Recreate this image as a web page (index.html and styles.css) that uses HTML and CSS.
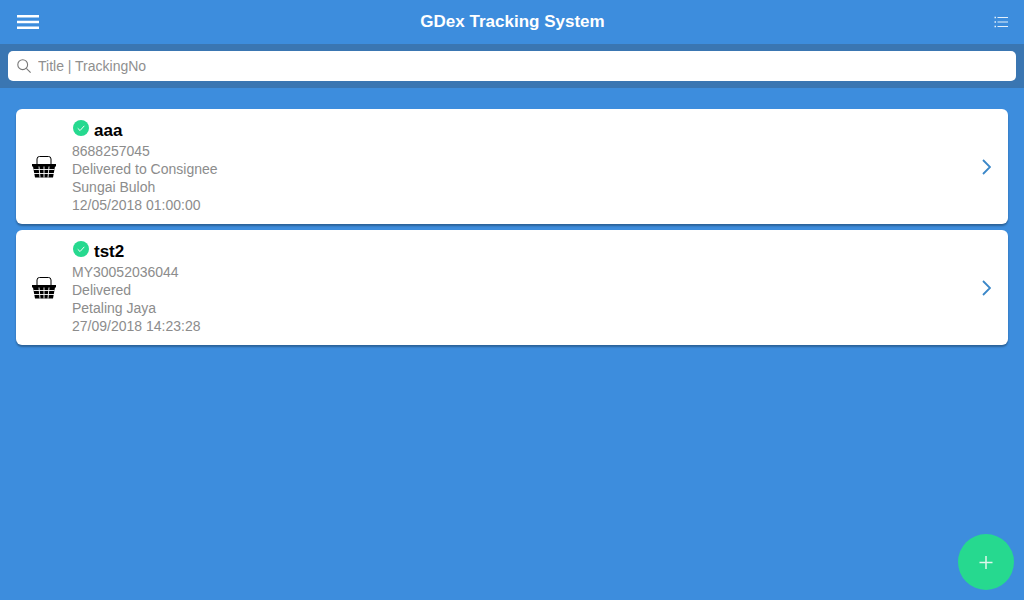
FILE: index.html
```html
<!DOCTYPE html>
<html lang="en">
<head>
    <meta charset="UTF-8">
    <meta name="viewport" content="width=device-width, initial-scale=1.0">
    <title>GDex Tracking System</title>
    <link rel="stylesheet" href="styles.css">
</head>
<body>
    <div id="main">
        <div id="header">
            <button class="iconbtn" id="menu">
                <svg width="22" height="14" viewBox="0 0 22 14"><path d="M0 1.200H22M0 7H22M0 12.800H22" stroke="#fff" stroke-width="2.400"/></svg>
            </button>
            <h3>GDex Tracking System</h3>
            <button class="iconbtn" id="listbtn">
                <svg width="14" height="12" viewBox="0 0 14 12" fill="none" stroke="#e4f0fb"><path d="M3.500 1.500H14M3.500 6H14M3.500 10.500H14"/><path d="M0.500 1.500H2M0.500 6H2M0.500 10.500H2" stroke-width="1.600"/></svg>
            </button>
        </div>

        <div id="searchbar">
            <div id="searchbox">
                <svg width="14" height="14" viewBox="0 0 14 14" fill="none" stroke="#777" stroke-width="1.100"><circle cx="5.700" cy="5.700" r="4.900"/><path d="M9.300 9.300L13.600 13.600"/></svg>
                <input type="text" placeholder="Title | TrackingNo">
            </div>
        </div>

        <div id="list">
            <!--Item 1-->
            <div class="card">
                <svg class="basket" width="24" height="22" viewBox="0 0 24 22"><path d="M5 9V3Q5 0.500 7.500 0.500H16.500Q19 0.500 19 3V9" fill="none" stroke="#000" stroke-width="1"/><path d="M0 8H24V10.500H23L21 21.500H3L1 10.500H0Z" fill="#000"/><path d="M7 10.500L8 21.500M12 10.500V21.500M17 10.500L16 21.500M1.500 13.500H22.500M2 17.500H22" stroke="#fff" stroke-width="0.900"/></svg>
                <div class="info">
                    <div class="title">
                        <svg class="tick" width="16" height="16" viewBox="0 0 17 17"><circle cx="8.500" cy="8.500" r="8.500" fill="#26d98f"/><path d="M5 8.800L7.500 11.200L12 6.200" fill="none" stroke="#fff" stroke-width="1"/></svg>
                        <span>aaa</span>
                    </div>
                    <p>8688257045</p>
                    <p>Delivered to Consignee</p>
                    <p>Sungai Buloh</p>
                    <p>12/05/2018 01:00:00</p>
                </div>
                <svg class="chevron" width="9" height="16" viewBox="0 0 9 16"><path d="M1 1L8 8L1 15" fill="none" stroke="#3a87c8" stroke-width="1.800"/></svg>
            </div>

            <!--Item 2-->
            <div class="card">
                <svg class="basket" width="24" height="22" viewBox="0 0 24 22"><path d="M5 9V3Q5 0.500 7.500 0.500H16.500Q19 0.500 19 3V9" fill="none" stroke="#000" stroke-width="1"/><path d="M0 8H24V10.500H23L21 21.500H3L1 10.500H0Z" fill="#000"/><path d="M7 10.500L8 21.500M12 10.500V21.500M17 10.500L16 21.500M1.500 13.500H22.500M2 17.500H22" stroke="#fff" stroke-width="0.900"/></svg>
                <div class="info">
                    <div class="title">
                        <svg class="tick" width="16" height="16" viewBox="0 0 17 17"><circle cx="8.500" cy="8.500" r="8.500" fill="#26d98f"/><path d="M5 8.800L7.500 11.200L12 6.200" fill="none" stroke="#fff" stroke-width="1"/></svg>
                        <span>tst2</span>
                    </div>
                    <p>MY30052036044</p>
                    <p>Delivered</p>
                    <p>Petaling Jaya</p>
                    <p>27/09/2018 14:23:28</p>
                </div>
                <svg class="chevron" width="9" height="16" viewBox="0 0 9 16"><path d="M1 1L8 8L1 15" fill="none" stroke="#3a87c8" stroke-width="1.800"/></svg>
            </div>
        </div>

        <button id="fab">
            <svg width="14" height="13" viewBox="0 0 14 13"><path d="M7 0V13M0.500 6.500H13.500" stroke="#dff7ec" stroke-width="1.500"/></svg>
        </button>
    </div>
</body>
</html>
```

FILE: styles.css
```css
*{
    margin: 0;
    padding: 0;
    box-sizing: border-box;
}

body{
    font-family: "Liberation Sans", Arial, sans-serif;
    background-color: #3d8ddd;
    overflow: hidden;
}

#main{
    position: relative;
    height: 600px;
    display: flex;
    flex-direction: column;
}

#header{
    height: 44px;
    display: flex;
    align-items: center;
    padding: 0 16px 0 17px;
    background-color: #3d8ddd;
}

#header h3{
    flex: 1;
    text-align: center;
    font-size: 17px;
    font-weight: bold;
    color: white;
}

.iconbtn{
    width: 22px;
    display: flex;
    justify-content: flex-end;
    border: none;
    background: none;
}

#searchbar{
    height: 44px;
    padding: 7px 8px;
    background-color: #3a76b2;
}

#searchbox{
    height: 30px;
    display: flex;
    align-items: center;
    gap: 7px;
    padding: 0 10px 0 9px;
    border-radius: 5px;
    background-color: white;
}

#searchbox input{
    flex: 1;
    border: none;
    outline: none;
    font-family: inherit;
    font-size: 14px;
}

#searchbox input::placeholder{
    color: #8f8f8f;
    opacity: 1;
}

#list{
    display: flex;
    flex-direction: column;
    gap: 6px;
    padding: 21px 16px 0;
}

.card{
    height: 115px;
    display: flex;
    align-items: center;
    padding: 0 16px;
    border-radius: 6px;
    background-color: white;
    box-shadow: 0 2px 2px rgba(0,0,0,0.3);
}

.basket{
    flex-shrink: 0;
}

.info{
    flex: 1;
    margin-left: 16px;
    padding-bottom: 1px;
    color: #8c8c8c;
    font-size: 14px;
    line-height: 18px;
}

.title{
    display: flex;
    align-items: center;
    gap: 5px;
    height: 24px;
    color: black;
    font-size: 17px;
    font-weight: bold;
}

.title span{
    margin-top: 1px;
}

.tick{
    margin-top: -4px;
    margin-left: 1px;
}

.chevron{
    margin-right: 1px;
}

#fab{
    position: absolute;
    right: 10px;
    bottom: 10px;
    width: 56px;
    height: 56px;
    display: flex;
    align-items: center;
    justify-content: center;
    border: none;
    border-radius: 50%;
    background-color: #26d98f;
}
```
